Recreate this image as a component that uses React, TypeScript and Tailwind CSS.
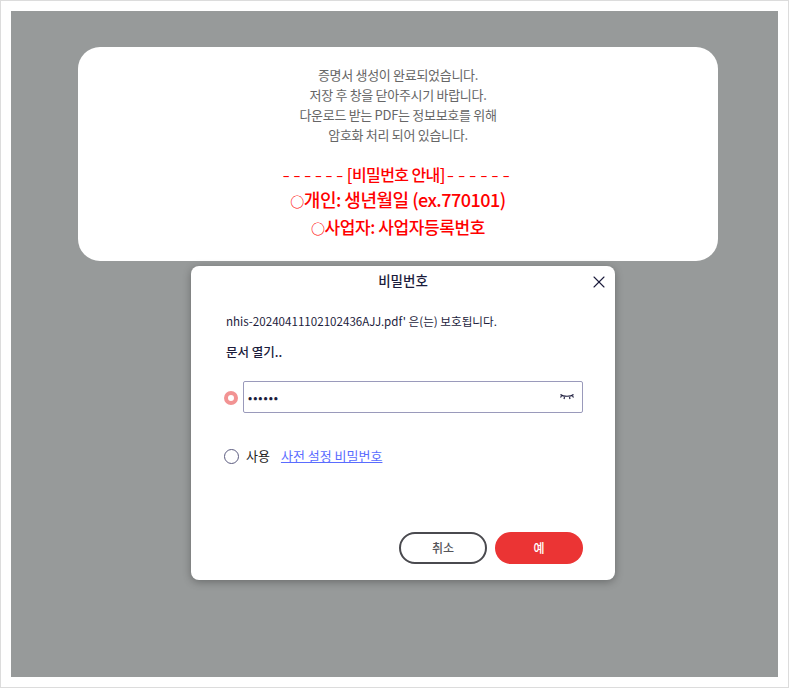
import { X } from 'lucide-react'

const font = "font-['Noto_Sans_CJK_KR','Noto_Sans',sans-serif]"

function NoticeCard() {
  return (
    <div className="ml-[67px] mt-9 h-[214px] w-[640px] rounded-[22px] bg-white pt-[18px] text-center">
      <div className="text-[13px] leading-[20px] tracking-[-0.3px] text-[#666666]">
        <p>증명서 생성이 완료되었습니다.</p>
        <p>저장 후 창을 닫아주시기 바랍니다.</p>
        <p>다운로드 받는 PDF는 정보보호를 위해</p>
        <p>암호화 처리 되어 있습니다.</p>
      </div>
      <div className="mt-[16px] font-medium text-[#ff0000]">
        <p className="text-[16px] leading-[26px] tracking-[-0.6px]">
          <span className="align-[-2px] text-[22px] font-light leading-none tracking-[3.4px]">------</span>[비밀번호 안내]<span className="ml-[2px] align-[-2px] text-[22px] font-light leading-none tracking-[3.8px]">------</span>
        </p>
        <p className="text-[18px] leading-[25px] tracking-[-0.5px]">
          <span className="text-[14px]">○</span>개인: 생년월일 (ex.770101)
        </p>
        <p className="text-[17px] leading-[26px] tracking-[-0.4px]">
          <span className="text-[14px]">○</span>사업자: 사업자등록번호
        </p>
      </div>
    </div>
  )
}

function EyeClosed() {
  return (
    <svg width="14" height="8" viewBox="0 0 14 8" fill="none" stroke="#1c1c3c" strokeWidth="1.2">
      <path d="M0.5 1.5C3 3.8 11 3.8 13.5 1.5" />
      <path d="M1.5 3L0.5 4.5M4.5 4.2L4 6M9.5 4.2L10 6M12.5 3L13.5 4.5" />
    </svg>
  )
}

function PasswordDialog() {
  return (
    <div className="ml-[180px] mt-[5px] flex h-[314px] w-[424px] flex-col rounded-lg bg-white shadow-[0_2px_8px_rgba(0,0,0,0.3)]">
      <div className="relative pt-[5px] text-center text-[13.5px] font-medium leading-[18px] text-[#1c1c3c]">
        비밀번호
        <button className="absolute right-[6px] top-[6px] text-[#1c1c3c]">
          <X size={20} strokeWidth={1.3} />
        </button>
      </div>
      <p className="mt-[23px] pl-[35px] text-[11.6px] leading-[18px] text-[#1c1c3c]">
        nhis-20240411102102436AJJ.pdf' 은(는) 보호됩니다.
      </p>
      <p className="mt-[13px] pl-[35px] text-[12.5px] font-medium leading-[18px] text-[#1c1c3c]">문서 열기..</p>
      <div className="mt-[20px] flex items-center pl-[33px]">
        <span className="mt-[1px] h-[14px] w-[14px] rounded-full border-[4px] border-[#f29393] bg-white" />
        <div className="ml-[5px] flex h-[32px] w-[340px] items-center justify-between rounded-[2px] border border-[#9a9abb] pl-[4px] pr-[8px]">
          <span className="text-[11px] font-bold tracking-[1px] text-[#1c1c3c]">••••••</span>
          <EyeClosed />
        </div>
      </div>
      <div className="mt-[34px] flex items-center pl-[33px] text-[13px] leading-[18px]">
        <span className="h-[15px] w-[15px] rounded-full border-[1.5px] border-[#5c5c80]" />
        <span className="ml-[7px] text-[#222222]">사용</span>
        <a className="ml-[11px] text-[#5a6cff] underline">사전 설정 비밀번호</a>
      </div>
      <div className="mb-[16px] mt-auto flex justify-end gap-[8px] pr-[32px]">
        <button className="h-[32px] w-[88px] rounded-full border-2 border-[#4a4a4f] text-[12px] font-medium text-[#55555a]">취소</button>
        <button className="h-[32px] w-[88px] rounded-full bg-[#eb3434] text-[12px] font-medium text-white">예</button>
      </div>
    </div>
  )
}

export default function App() {
  return (
    <div className={`h-[688px] w-[789px] border border-[#dcdcdc] bg-white p-[10px] ${font}`}>
      <div className="flex h-[666px] w-[767px] flex-col items-start bg-[#979a9a]">
        <NoticeCard />
        <PasswordDialog />
      </div>
    </div>
  )
}
